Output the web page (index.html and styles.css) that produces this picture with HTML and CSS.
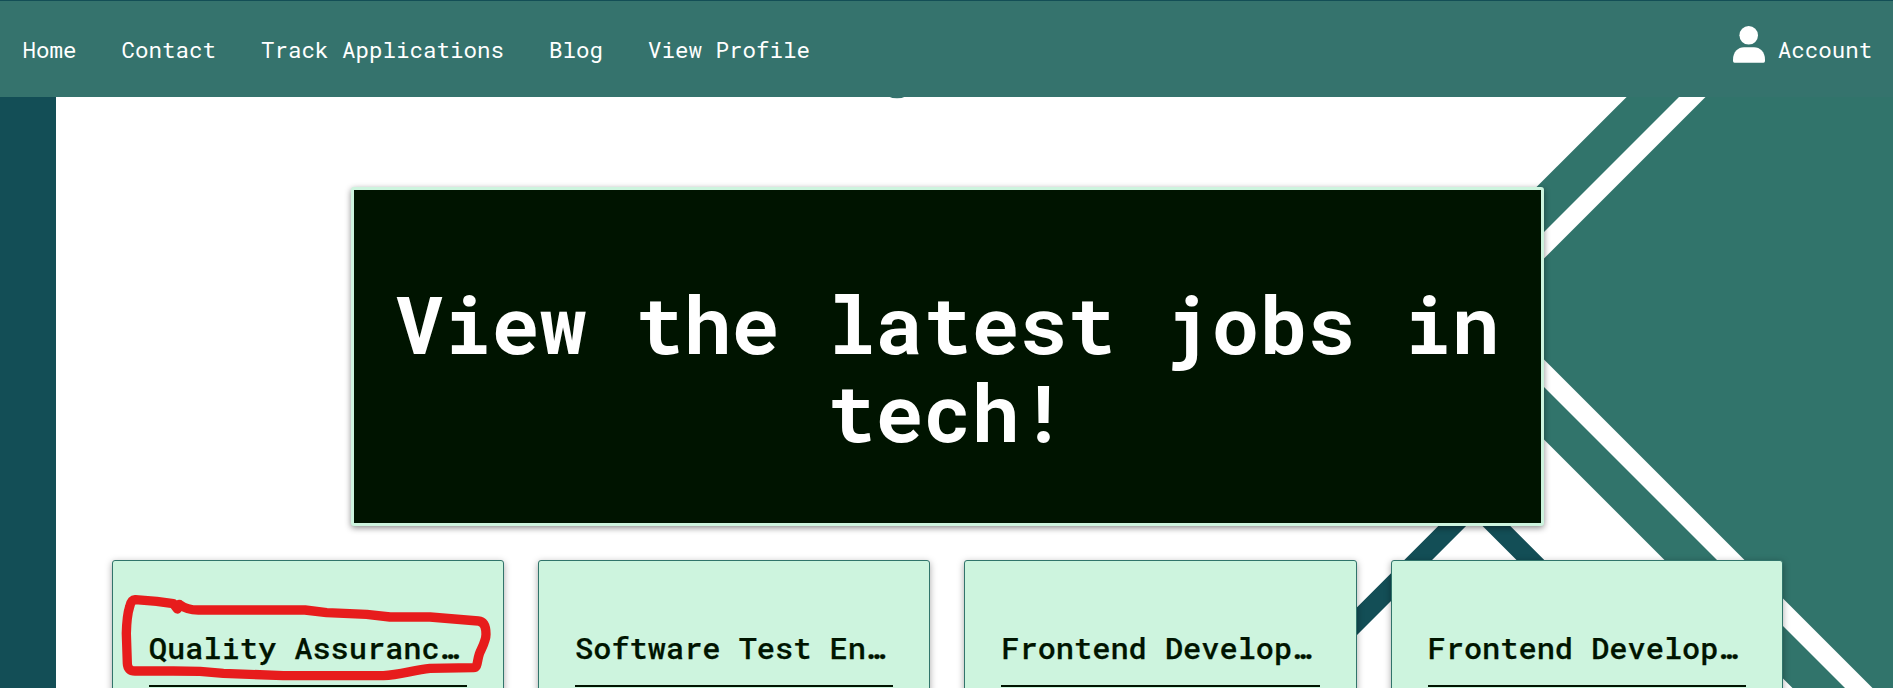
FILE: index.html
```html
<!DOCTYPE html>
<html lang="en">
<head>
<meta charset="utf-8">
<title>Jobs</title>
<link rel="stylesheet" href="styles.css">
</head>
<body>
<svg class="backdrop" viewBox="0 0 1893 688" aria-hidden="true">
  <rect width="56" height="688" fill="#134e56"/>
  <ellipse cx="897" cy="92" rx="12" ry="6.3" fill="#35736d"/>
  <path d="M1723.7 0 1414 309.5 1792.5 688H1893V0Z" fill="#31746b"/>
  <path d="M1776 0 1466.5 309.5 1845 688H1872.5L1493.5 309 1802.5 0Z" fill="#fff"/>
  <path d="M1474.3 490 1276.3 688H1304L1474.3 517.7 1644.6 688H1672.3Z" fill="#134e56"/>
</svg>
<div class="page">
  <nav class="navbar">
    <div class="links">
      <a class="link">Home</a>
      <a class="link">Contact</a>
      <a class="link">Track Applications</a>
      <a class="link">Blog</a>
      <a class="link">View Profile</a>
    </div>
    <a class="account">
      <svg class="user-icon" viewBox="0 0 32 38"><circle cx="15.7" cy="10.3" r="9.3"/><path d="M1.5 37.7Q0 37.7 0 36V34.5C0 27 5 22.3 11 22.3H21C27 22.3 32 27 32 34.5V36Q32 37.7 30.5 37.7Z"/></svg>
      <span class="account-label">Account</span>
    </a>
  </nav>
  <header class="hero"><h1 class="headline">View the latest jobs in tech!</h1></header>
  <main class="cards">
    <article class="card">
      <h2 class="title">Quality Assurance Engineer</h2>
      <svg class="scribble" viewBox="66 60 1176 384"><path d="M136 179 200 184 250 191 262 207 268 193Q290 210 325 210H645L710 218 830 223 900 231H1020L1165 243Q1188 245 1188 283C1188 305 1174 325 1168 342C1160 365 1165 382 1150 383L1020 385C970 390 930 405 880 407H580L400 400 330 394 250 393H135Q113 393 112 370L109 280C110 240 111 225 119 200Q124 178 136 179Z"/></svg>
    </article>
    <article class="card"><h2 class="title">Software Test Engineer</h2></article>
    <article class="card"><h2 class="title">Frontend Developer Intern</h2></article>
    <article class="card"><h2 class="title">Frontend Developer Intern</h2></article>
  </main>
</div>
</body>
</html>
```
FILE: styles.css
```css
* { box-sizing: border-box; }
body {
  margin: 0;
  height: 688px;
  overflow: hidden;
  background: #fff;
  font-family: "Roboto Mono", "DejaVu Sans Mono", monospace;
}
.backdrop {
  position: absolute;
  top: 0;
  left: 0;
  width: 1893px;
  height: 688px;
}
.page {
  position: relative;
  height: 688px;
  overflow: hidden;
}
.navbar {
  display: flex;
  justify-content: space-between;
  align-items: center;
  height: 97px;
  padding: 0 20.7px 0 22.5px;
  border-top: 1px solid #134e56;
  background: #35736d;
  color: #fff;
  font-size: 22.5px;
  line-height: 30px;
}
.links { display: flex; gap: 45px; }
.account { display: flex; gap: 12.5px; }
.user-icon {
  width: 32px;
  height: 38px;
  margin-top: -9px;
  fill: #fff;
}
.account-label { height: 30px; }
.hero {
  width: 1193px;
  height: 339px;
  margin: 90px 0 0 351px;
  padding: 89px 30px 0;
  border: 3px solid #cdf4de;
  border-radius: 3px;
  background: #001400;
  box-shadow: 0 2px 6px rgba(0, 0, 0, .45);
}
.headline {
  margin: 0;
  color: #fff;
  font-size: 80px;
  font-weight: 700;
  line-height: 88px;
  text-align: center;
}
.cards {
  display: grid;
  grid-template-columns: repeat(4, 1fr);
  gap: 34px;
  width: 1671px;
  margin: 34px 0 0 111.8px;
}
.card {
  position: relative;
  height: 420px;
  min-width: 0;
  padding: 64px 36px;
  border: 1px solid #31746b;
  border-radius: 3px;
  background: #cdf4de;
  box-shadow: 0 2px 7px rgba(0, 0, 0, .35);
}
.title {
  margin: 0;
  height: 62px;
  overflow: hidden;
  border-bottom: 2px solid #001400;
  color: #001400;
  font-size: 30.3px;
  font-weight: 500;
  line-height: 44px;
  text-overflow: ellipsis;
  white-space: nowrap;
  -webkit-text-stroke: .25px #001400;
}
.scribble {
  position: absolute;
  top: -1px;
  left: -1px;
  width: 392px;
  height: 128px;
  fill: none;
  stroke: #e71c1c;
  stroke-width: 28;
  stroke-linejoin: round;
}
```
